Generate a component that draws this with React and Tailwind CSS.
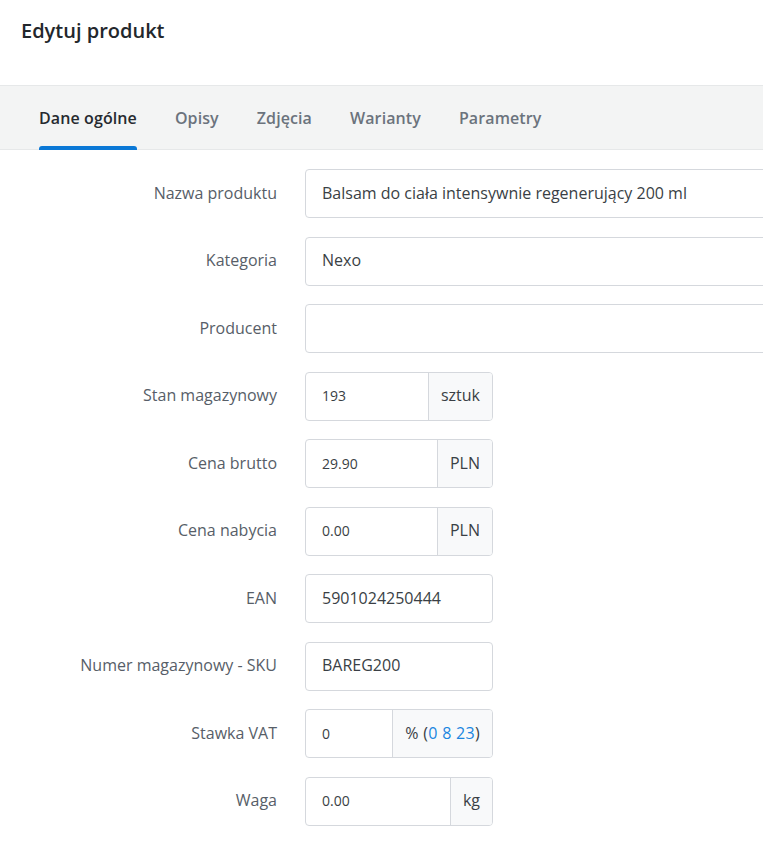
import { useState } from 'react'

const tabs = ['Dane ogólne', 'Opisy', 'Zdjęcia', 'Warianty', 'Parametry']

const fields = [
  { label: 'Nazwa produktu', value: 'Balsam do ciała intensywnie regenerujący 200 ml', wide: true },
  { label: 'Kategoria', value: 'Nexo', wide: true },
  { label: 'Producent', value: '', wide: true },
  { label: 'Stan magazynowy', value: '193', addon: 'sztuk', small: true },
  { label: 'Cena brutto', value: '29.90', addon: 'PLN', small: true },
  { label: 'Cena nabycia', value: '0.00', addon: 'PLN', small: true },
  { label: 'EAN', value: '5901024250444' },
  { label: 'Numer magazynowy - SKU', value: 'BAREG200' },
  { label: 'Stawka VAT', value: '0', vat: true, small: true },
  { label: 'Waga', value: '0.00', addon: 'kg', small: true },
]

const Field = ({ field }) => {
  const textCls = field.small ? 'text-[14px]' : 'text-[16px]'

  if (field.wide) {
    return (
      <div className="w-[500px] h-full border border-[#d5d8dd] rounded-[4px] flex items-center px-4 pb-[2px] bg-white">
        <span className={`${textCls} text-[#3a3f45]`}>{field.value}</span>
      </div>
    )
  }

  if (!field.addon && !field.vat) {
    return (
      <div className="w-[188px] h-full border border-[#d5d8dd] rounded-[4px] flex items-center px-4 pb-[2px] bg-white">
        <span className={`${textCls} text-[#3a3f45]`}>{field.value}</span>
      </div>
    )
  }

  return (
    <div className="w-[188px] h-full border border-[#d5d8dd] rounded-[4px] flex overflow-hidden bg-white">
      <div className="flex-1 flex items-center px-4 pb-[1px]">
        <span className={`${textCls} text-[#3a3f45]`}>{field.value}</span>
      </div>
      <div className="border-l border-[#d5d8dd] bg-[#f8f9fa] flex items-center px-3 pb-[2px] text-[16px] text-[#3a3f45]">
        {field.vat ? (
          <span className="tracking-[0.3px]">
            % (<span className="text-[#1a86e0]">0</span> <span className="text-[#1a86e0]">8</span>{' '}
            <span className="text-[#1a86e0]">23</span>)
          </span>
        ) : (
          field.addon
        )}
      </div>
    </div>
  )
}

const App = () => {
  const [active, setActive] = useState(0)

  return (
    <div className="w-[763px] h-[843px] overflow-hidden bg-white font-['Open_Sans',sans-serif]">
      <div className="h-[85px] px-[21px] pt-[17px]">
        <h1 className="text-[20px] leading-[28px] font-semibold text-[#23272c]">Edytuj produkt</h1>
      </div>

      <div className="h-[65px] bg-[#f3f4f4] border-t border-b border-[#e6e8e9] flex items-center pl-[39px] gap-[38px]">
        {tabs.map((tab, i) => (
          <button
            key={tab}
            onClick={() => setActive(i)}
            className={`relative h-full flex items-center text-[16px] font-semibold ${
              i === active ? 'text-[#262a2f]' : 'text-[#6b737d]'
            }`}
          >
            <span className="tracking-[0.1px]">{tab}</span>
            {i === active && (
              <span className="absolute left-0 right-0 bottom-[-1px] h-[4px] rounded-t-[3px] bg-[#0a78d6]"></span>
            )}
          </button>
        ))}
      </div>

      <div className="pt-[19px] flex flex-col gap-[18.5px]">
        {fields.map((field) => (
          <div key={field.label} className="flex items-center h-[49px] gap-[28px]">
            <label className="w-[277px] shrink-0 text-right text-[16px] leading-[22px] pb-[2px] text-[#575e68]">
              {field.label}
            </label>
            <div className="h-full">
              <Field field={field} />
            </div>
          </div>
        ))}
      </div>
    </div>
  )
}

export default App
